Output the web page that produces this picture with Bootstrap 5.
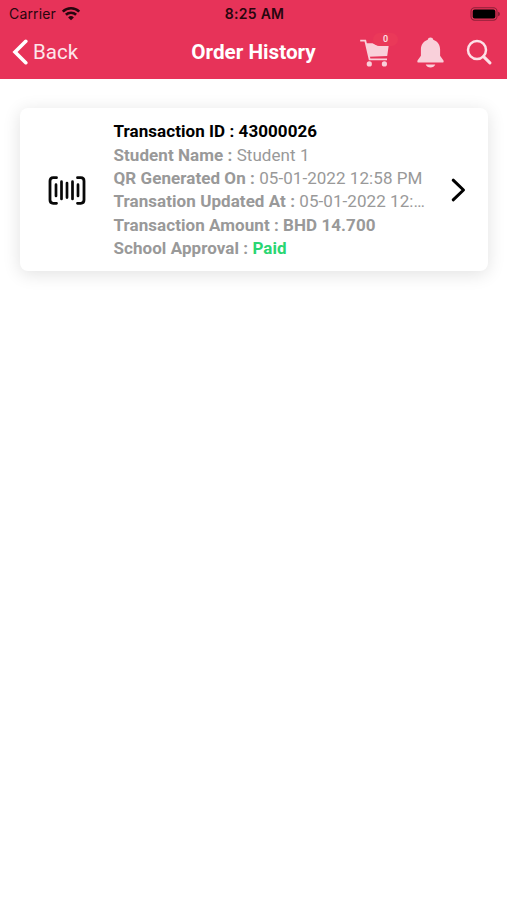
<!DOCTYPE html>
<html lang="en">
<head>
<meta charset="utf-8">
<meta name="viewport" content="width=device-width, initial-scale=1">
<title>Order History</title>
<link rel="stylesheet" href="https://cdn.jsdelivr.net/npm/bootstrap@5.3.0/dist/css/bootstrap.min.css">
<style>
body { font-family: Roboto, sans-serif; background: #fff; }
svg { display: block; flex: none; }
.app-header { background: #e73359; height: 79px; }
.status-bar { height: 27px; font-family: Inter, sans-serif; font-size: 14px; line-height: 27px; color: #28060e; padding: 0 7px 0 9px; }
.status-side { flex: 1 1 0; }
.carrier { letter-spacing: .15px; }
.wifi { margin-left: 5px; margin-bottom: 1px; }
.clock { font-weight: 600; letter-spacing: .3px; }
.title-bar { height: 50px; padding: 0 15px 0 12px; color: #fff; line-height: 50px; }
.bar-side { flex: 1 1 0; }
.back-link { font-size: 20.5px; color: #fde6eb; gap: 5px; }
.screen-title { font-size: 20.7px; font-weight: 700; margin-left: 3px; }
.tools { color: #f9d0da; }
.bell { margin-left: 27px; }
.lens { margin-left: 22px; }
.cart { margin-top: 2px; }
.cart-count { top: -6px; left: 13px; width: 25px; height: 13px; border-radius: 7px; background: #ea3959; color: #fde6eb; font-size: 9px; font-weight: 500; line-height: 13px; text-align: center; }
.order-card { margin: 29px 19px 0 20px; height: 163px; border: 0; border-radius: 8px; box-shadow: 0 3px 18px rgba(0,0,0,.12); padding: 11px 22px 0 28px; }
.details { font-size: 17px; letter-spacing: .06px; line-height: 23.2px; color: #999; width: 313.5px; margin-left: 27.5px; white-space: nowrap; }
.details b { font-weight: 700; }
.order-id { color: #000; font-weight: 700; line-height: 25px; }
.paid { color: #2ad672; }
.barcode { margin-top: 57px; }
.chevron { margin-top: 59px; }
</style>
<script src="https://cdn.jsdelivr.net/npm/bootstrap@5.3.0/dist/js/bootstrap.bundle.min.js"></script>
</head>
<body class="min-vh-100">
<header class="app-header">
  <div class="status-bar d-flex align-items-center">
    <div class="status-side d-flex align-items-center">
      <span class="carrier">Carrier</span>
      <svg class="wifi" width="20" height="15" viewBox="0 0 20 15" fill="none" stroke="#28060e" stroke-width="2.6"><path d="M1.8 5.600a11.700 11.700 0 0 1 16.400 0M4.900 8.800a7.300 7.300 0 0 1 10.200 0"/><path d="M10 14.300 7.100 11.400a4.100 4.100 0 0 1 5.800 0Z" fill="#28060e" stroke="none"/></svg>
    </div>
    <span class="clock">8:25 AM</span>
    <div class="status-side d-flex justify-content-end">
      <svg width="30" height="14" viewBox="0 0 30 14"><rect x="1" y=".8" width="26" height="12.4" rx="3.6" fill="none" stroke="#8f2038" stroke-width="1.1"/><rect x="2.7" y="2.5" width="22.6" height="9" rx="2" fill="#000"/><path d="M28 4.800q2 .5 2 2.200t-2 2.200Z" fill="#8f2038"/></svg>
    </div>
  </div>
  <nav class="title-bar d-flex align-items-center">
    <div class="bar-side">
      <a class="back-link d-flex align-items-center text-decoration-none" href="#">
        <svg width="16" height="26" viewBox="0 0 16 26" fill="none" stroke="#fff" stroke-width="3.6" stroke-linecap="round"><path d="M13.800 2.300 3 13l10.800 10.700"/></svg>
        <span>Back</span>
      </a>
    </div>
    <span class="screen-title">Order History</span>
    <div class="bar-side tools d-flex align-items-center justify-content-end">
      <div class="cart position-relative">
        <svg width="30" height="28" viewBox="0 0 30 28"><path d="M.2 1.700h5.100l4.300 18.600h17.400" fill="none" stroke="currentColor" stroke-width="1.800"/><path d="M6 4.200h6.500q4.500 3.200 8 2.300h8.200L27.200 17 9 17.700Z" fill="currentColor"/><circle cx="9.300" cy="24.900" r="2.600" fill="currentColor"/><circle cx="24.400" cy="24.900" r="2.600" fill="currentColor"/></svg>
        <span class="cart-count position-absolute">0</span>
      </div>
      <svg class="bell" width="27" height="31" viewBox="0 0 27 31" fill="currentColor"><path d="M13.500.4a2.800 2.800 0 0 0-2.800 2.400C6.400 4.400 3.900 8 3.900 12.500v6.200L.7 23.300c-.8 1.300-.2 2.300 1.300 2.300h23c1.500 0 2.100-1 1.300-2.300l-3.200-4.600v-6.200c0-4.500-2.500-8.100-6.800-9.700A2.800 2.800 0 0 0 13.500.4ZM8.700 27.500h9.600c-.8 2-2.500 3-4.800 3s-4-1-4.800-3Z"/></svg>
      <svg class="lens" width="26" height="26" viewBox="0 0 26 26" fill="none" stroke="#fde0e7"><circle cx="11" cy="11" r="9" stroke-width="2.500"/><path d="m17.600 17.600 6.300 6.300" stroke-width="3" stroke-linecap="round"/></svg>
    </div>
  </nav>
</header>
<main class="pb-5">
  <article class="order-card card flex-row">
    <svg class="barcode" width="38" height="29" viewBox="0 0 38 29" fill="none" stroke="#080808" stroke-linecap="round"><path d="M8.500 1.700H5.200Q2 1.700 2 4.900v19.200q0 3.200 3.200 3.200h3.300M29.500 1.700h3.300Q36 1.700 36 4.900v19.200q0 3.200-3.200 3.200h-3.300" stroke-width="2.800"/><path d="M8 8.700v11.200M13.500 5.700v17.200M19 7v14.600M24.500 5.700v17.200M30 8.700v11.200" stroke-width="2.700"/></svg>
    <div class="details">
      <div class="order-id">Transaction ID : 43000026</div>
      <div><b>Student Name :</b> Student 1</div>
      <div><b>QR Generated On :</b> 05-01-2022 12:58 PM</div>
      <div><b>Transation Updated At :</b> 05-01-2022 12:…</div>
      <div><b>Transaction Amount : BHD 14.700</b></div>
      <div><b>School Approval : <span class="paid">Paid</span></b></div>
    </div>
    <svg class="chevron ms-auto" width="15" height="24" viewBox="0 0 15 24" fill="none" stroke="#000" stroke-width="3" stroke-linecap="round" stroke-linejoin="round"><path d="m2.200 2.200 10.300 9.800-10.300 9.800"/></svg>
  </article>
</main>
</body>
</html>
